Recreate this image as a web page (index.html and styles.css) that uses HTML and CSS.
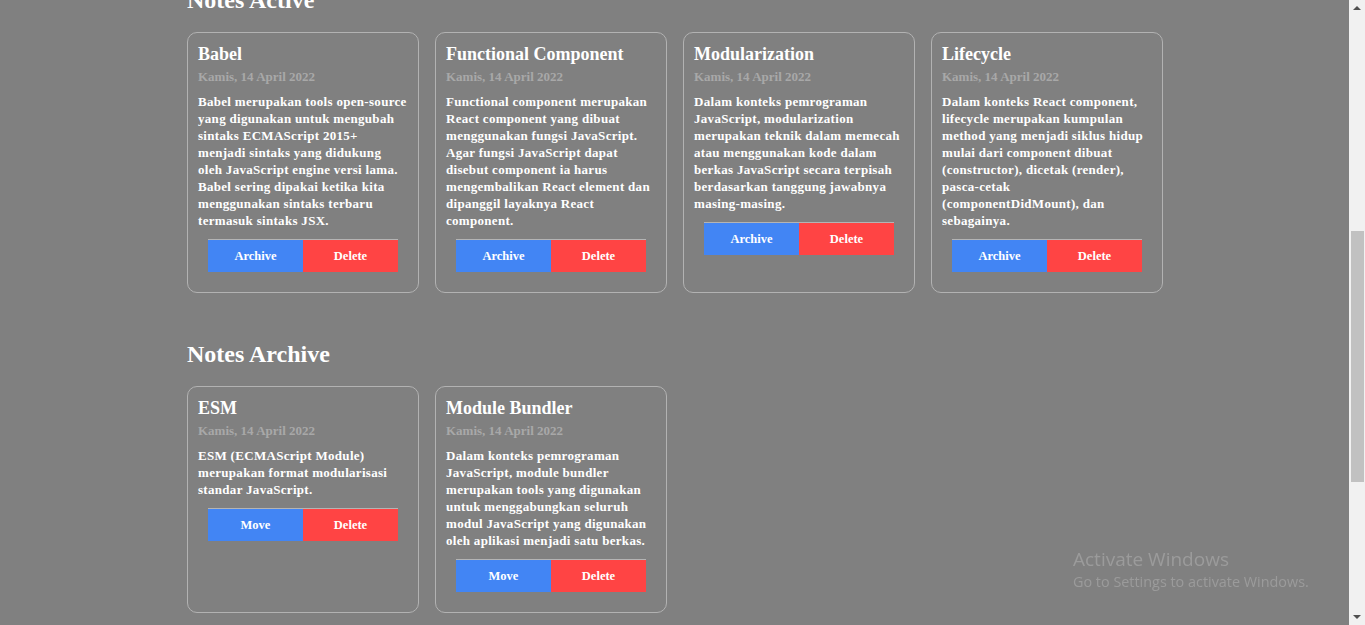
FILE: index.html
```html
<!DOCTYPE html>
<html lang="id">
<head>
<meta charset="utf-8">
<title>Notes</title>
<link rel="stylesheet" href="styles.css">
</head>
<body>
<div class="viewport">
  <main class="page">
    <section class="section">
      <h2 class="section-title">Notes Active</h2>
      <div class="notes-grid">
        <article class="note">
          <h3 class="note-title">Babel</h3>
          <p class="note-date">Kamis, 14 April 2022</p>
          <p class="note-body">Babel merupakan tools open-source yang digunakan untuk mengubah sintaks ECMAScript 2015+ menjadi sintaks yang didukung oleh JavaScript engine versi lama. Babel sering dipakai ketika kita menggunakan sintaks terbaru termasuk sintaks JSX.</p>
          <div class="note-actions"><button class="btn btn-blue">Archive</button><button class="btn btn-red">Delete</button></div>
        </article>
        <article class="note">
          <h3 class="note-title">Functional Component</h3>
          <p class="note-date">Kamis, 14 April 2022</p>
          <p class="note-body">Functional component merupakan React component yang dibuat menggunakan fungsi JavaScript. Agar fungsi JavaScript dapat disebut component ia harus mengembalikan React element dan dipanggil layaknya React component.</p>
          <div class="note-actions"><button class="btn btn-blue">Archive</button><button class="btn btn-red">Delete</button></div>
        </article>
        <article class="note">
          <h3 class="note-title">Modularization</h3>
          <p class="note-date">Kamis, 14 April 2022</p>
          <p class="note-body">Dalam konteks pemrograman JavaScript, modularization merupakan teknik dalam memecah atau menggunakan kode dalam berkas JavaScript secara terpisah berdasarkan tanggung jawabnya masing-masing.</p>
          <div class="note-actions"><button class="btn btn-blue">Archive</button><button class="btn btn-red">Delete</button></div>
        </article>
        <article class="note">
          <h3 class="note-title">Lifecycle</h3>
          <p class="note-date">Kamis, 14 April 2022</p>
          <p class="note-body">Dalam konteks React component, lifecycle merupakan kumpulan method yang menjadi siklus hidup mulai dari component dibuat (constructor), dicetak (render), pasca-cetak<br>(componentDidMount), dan sebagainya.</p>
          <div class="note-actions"><button class="btn btn-blue">Archive</button><button class="btn btn-red">Delete</button></div>
        </article>
      </div>
    </section>
    <section class="section">
      <h2 class="section-title">Notes Archive</h2>
      <div class="notes-grid">
        <article class="note">
          <h3 class="note-title">ESM</h3>
          <p class="note-date">Kamis, 14 April 2022</p>
          <p class="note-body">ESM (ECMAScript Module) merupakan format modularisasi standar JavaScript.</p>
          <div class="note-actions"><button class="btn btn-blue">Move</button><button class="btn btn-red">Delete</button></div>
        </article>
        <article class="note">
          <h3 class="note-title">Module Bundler</h3>
          <p class="note-date">Kamis, 14 April 2022</p>
          <p class="note-body">Dalam konteks pemrograman JavaScript, module bundler merupakan tools yang digunakan untuk menggabungkan seluruh modul JavaScript yang digunakan oleh aplikasi menjadi satu berkas.</p>
          <div class="note-actions"><button class="btn btn-blue">Move</button><button class="btn btn-red">Delete</button></div>
        </article>
      </div>
    </section>
  </main>
  <div class="scrollbar" aria-hidden="true">
    <span class="scroll-arrow scroll-up"></span>
    <div class="scroll-track"><div class="scroll-thumb"></div></div>
    <span class="scroll-arrow scroll-down"></span>
  </div>
</div>
<div class="watermark">
  <div class="wm-title">Activate Windows</div>
  <div class="wm-sub">Go to Settings to activate Windows.</div>
</div>
</body>
</html>
```

FILE: styles.css
```css
* { box-sizing: border-box; }
html, body {
  margin: 0;
  padding: 0;
  height: 100%;
  overflow: hidden;
  background: #808080;
}
body {
  font-family: "Liberation Serif", "Times New Roman", serif;
  color: #fff;
}
.viewport {
  display: flex;
  height: 625px;
  overflow: hidden;
}
.page {
  flex: 1;
  min-width: 0;
  margin-top: -13px;
}
.section {
  width: 975px;
  margin: 0 auto 48px;
}
.section-title {
  margin: 0 0 18px;
  font-size: 24px;
  line-height: 27px;
  font-weight: 700;
  color: #fff;
}
.notes-grid {
  display: grid;
  grid-template-columns: repeat(4, 232px);
  gap: 16px;
}
.note {
  border: 1px solid #b2b2b2;
  border-radius: 10px;
  padding: 10px 10px 20px;
}
.note-title {
  margin: 0;
  font-size: 18px;
  line-height: 22px;
  font-weight: 700;
}
.note-date {
  margin: 3px 0 0;
  font-size: 13px;
  line-height: 17px;
  color: #a8a8a8;
  font-weight: 700;
}
.note-body {
  margin: 8px 0 0;
  font-size: 13px;
  line-height: 17px;
  font-weight: 700;
  letter-spacing: 0.3px;
}
.note-actions {
  display: flex;
  width: 190px;
  margin: 10px auto 0;
  border-top: 1px solid #b4b4b4;
}
.btn {
  flex: 1;
  height: 32px;
  border: 0;
  padding: 0;
  font-family: "Liberation Serif", "Times New Roman", serif;
  font-weight: 700;
  font-size: 12.5px;
  color: #fff;
}
.btn-blue { background: #4285f4; }
.btn-red { background: #ff4444; }

.scrollbar {
  width: 16px;
  flex: none;
  background: #f1f1f1;
  display: flex;
  flex-direction: column;
  align-items: center;
}
.scroll-arrow {
  width: 0;
  height: 0;
  border-left: 4px solid transparent;
  border-right: 4px solid transparent;
  margin: 6px 0;
}
.scroll-up { border-bottom: 4px solid #505050; }
.scroll-down { border-top: 4px solid #505050; }
.scroll-track {
  flex: 1;
  width: 100%;
  display: flex;
  flex-direction: column;
  padding: 215px 1px 127px 2px;
}
.scroll-thumb {
  flex: 1;
  background: #c1c1c1;
}
.watermark {
  position: fixed;
  left: 1073px;
  top: 546px;
  font-family: "Open Sans", "Noto Sans", sans-serif;
  color: #9b9b9b;
}
.wm-title {
  font-size: 19px;
  line-height: 26px;
}
.wm-sub {
  font-size: 14.4px;
  line-height: 20px;
}
```
